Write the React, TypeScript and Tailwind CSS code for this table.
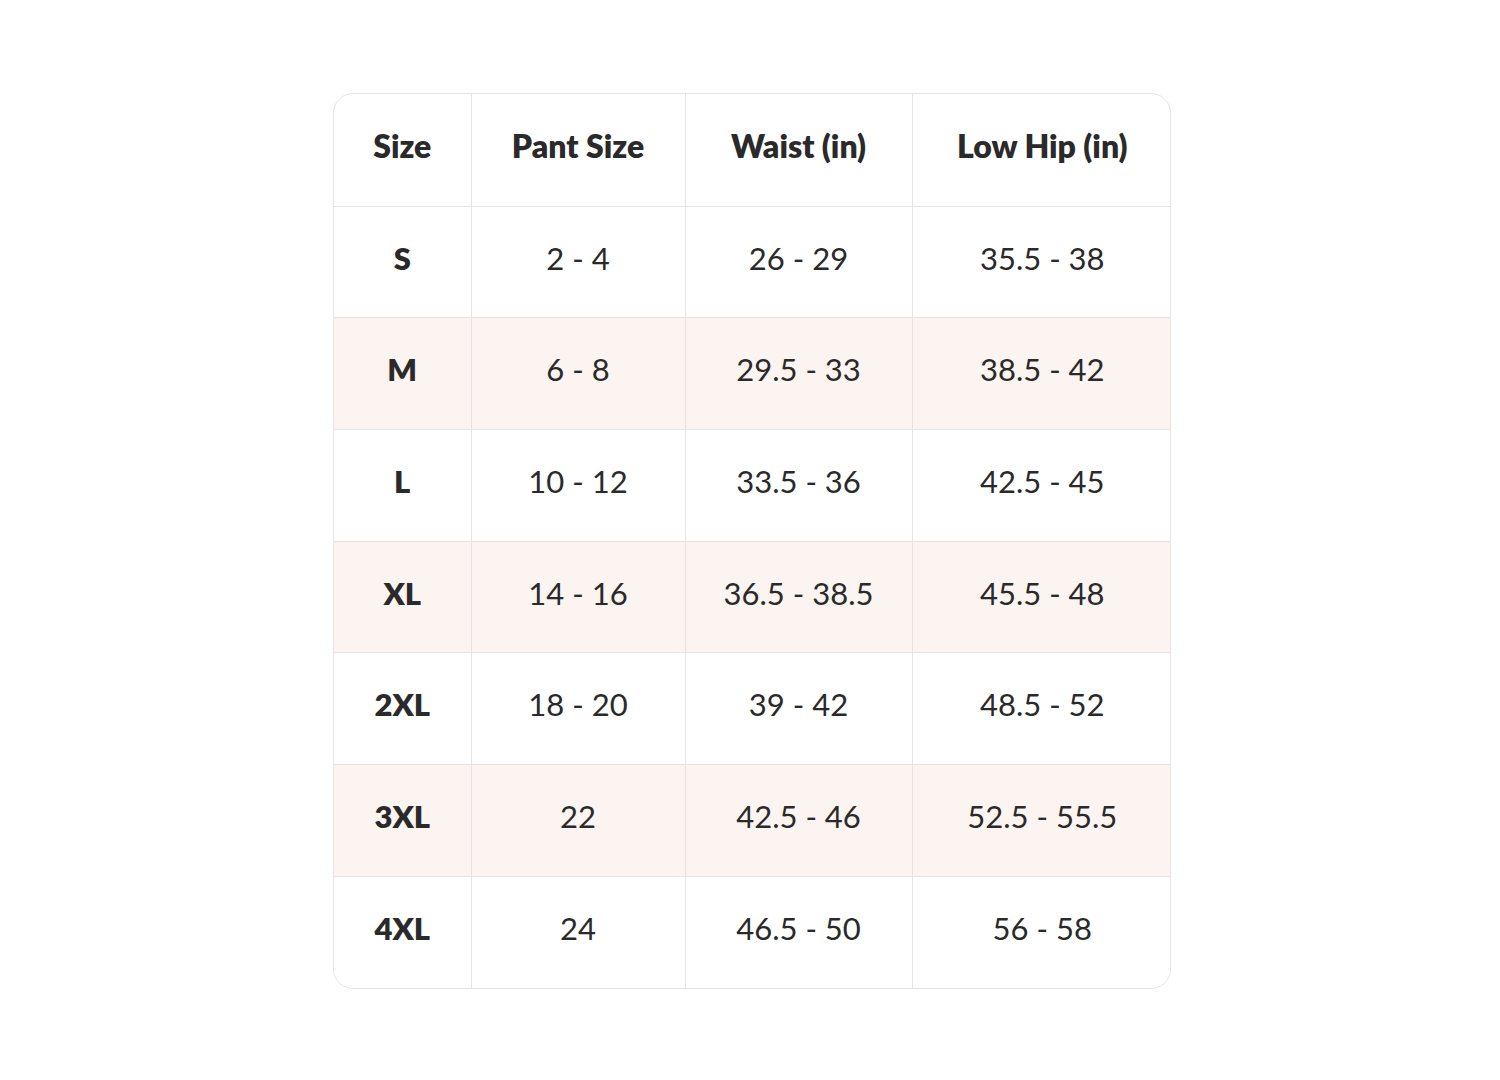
const rows = [
  ["S", "2 - 4", "26 - 29", "35.5 - 38"],
  ["M", "6 - 8", "29.5 - 33", "38.5 - 42"],
  ["L", "10 - 12", "33.5 - 36", "42.5 - 45"],
  ["XL", "14 - 16", "36.5 - 38.5", "45.5 - 48"],
  ["2XL", "18 - 20", "39 - 42", "48.5 - 52"],
  ["3XL", "22", "42.5 - 46", "52.5 - 55.5"],
  ["4XL", "24", "46.5 - 50", "56 - 58"],
]

const headers = ["Size", "Pant Size", "Waist (in)", "Low Hip (in)"]
const widths = ["w-[137px]", "w-[214px]", "w-[227px]", "w-[260px]"]

export default function App() {
  return (
    <div className="min-h-screen bg-white flex items-start justify-center pt-[93px] pl-[4px] font-['Lato',sans-serif] text-[#2a2a2a]">
      <div className="w-[838px] rounded-[20px] border border-[#e4e4e4] overflow-hidden">
        <table className="w-full border-collapse table-fixed">
          <thead>
            <tr className="h-[112px]">
              {headers.map((h, i) => (
                <th
                  key={h}
                  className={`${widths[i]} pb-[8px] text-[32px] font-extrabold text-center border-b border-[#e4e4e4] ${i < 3 ? "border-r" : ""}`}
                >
                  {h}
                </th>
              ))}
            </tr>
          </thead>
          <tbody>
            {rows.map((r, ri) => (
              <tr key={r[0]} className={`h-[111.7px] ${ri % 2 === 1 ? "bg-[#fcf4f0]" : "bg-white"}`}>
                {r.map((c, ci) => (
                  <td
                    key={ci}
                    className={`pb-[8px] text-center text-[31px] border-[#e4e4e4] ${ci === 0 ? "font-extrabold" : "font-normal"} ${ci < 3 ? "border-r" : ""} ${ri < rows.length - 1 ? "border-b" : ""}`}
                  >
                    {c}
                  </td>
                ))}
              </tr>
            ))}
          </tbody>
        </table>
      </div>
    </div>
  )
}
